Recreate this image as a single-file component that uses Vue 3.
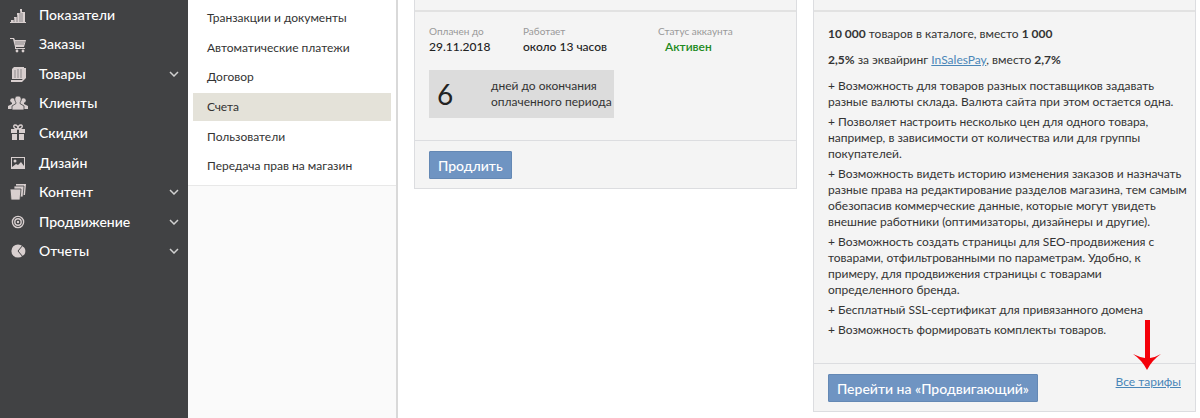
<template>
  <div class="layout">
    <nav class="sidebar">
      <ul class="sidebar__list">
        <li v-for="item in menu" :key="item.icon">
          <a href="#" class="sidebar__link">
            <svg class="sidebar__icon" viewBox="0 0 20 20" aria-hidden="true">
              <g v-if="item.icon === 'chart'">
                <path d="M3 15h3v3H3zM6 12h3v6H6zM9 8h3v10H9zM12 4h2v14h-2zM14 7h3v11h-3z" />
                <path d="M2 17h16v1H2z" />
                <path d="M6 13v4M9 10v7M12 6v11M14 8v9" class="line line--dark line--thin" />
              </g>
              <g v-else-if="item.icon === 'cart'">
                <path d="M2 4h4l1 2h11l-2 7H8v1h9v1H7v-2L5 5H2z" />
                <path d="M7 8h10M7 10h9" class="line line--dark line--thin" />
                <circle cx="9" cy="17" r="1.4" />
                <circle cx="15" cy="17" r="1.4" />
              </g>
              <g v-else-if="item.icon === 'goods'">
                <path d="M6 3h10v12H4V5z" />
                <path d="M7 6v8M10 5v9M13 5v9" class="line line--dark line--thin" />
                <path d="M16 4h2v10l-4 4H3v-2h11l2-3z" />
              </g>
              <g v-else-if="item.icon === 'clients'">
                <circle cx="4.5" cy="7.5" r="2.3" />
                <circle cx="15.5" cy="7.5" r="2.3" />
                <path d="M0 16v-3l4-2V8h4v8zM20 16v-3l-4-2V8h-4v8z" />
                <path
                  d="M10 3c2.4 0 3.4 1.4 3.2 3.4S12 9 12 10.500l4 2.500v4H4v-4l4-2.500C8 9 7 8.400 6.800 6.400S7.600 3 10 3z"
                  class="cutout"
                />
              </g>
              <g v-else-if="item.icon === 'gift'">
                <path d="M3 6h6v4H3zM11 6h6v4h-6zM4 11h5v6H4zM11 11h5v6h-5z" />
                <path d="M10 6C5 6 5 2 7 2s3 2 3 4c0-2 1-4 3-4s2 4-3 4z" class="line" />
              </g>
              <g v-else-if="item.icon === 'image'">
                <path d="M3 4h14v12H3z" />
                <path d="M4 5h12v8l-3-4-3 3-2-1-4 3z" class="dark" />
                <circle cx="7" cy="8" r="1.5" />
              </g>
              <g v-else-if="item.icon === 'pages'">
                <path d="M8 2h10l-1 11H8z" />
                <path d="M6 4h10l-1 11H6z" class="cutout" />
                <path d="M2 7h11l-1 11H3z" class="cutout" />
              </g>
              <g v-else-if="item.icon === 'target'">
                <circle cx="10" cy="10" r="5.6" class="line" />
                <circle cx="10" cy="10" r="3.2" class="line" />
                <circle cx="10" cy="10" r="1.2" />
              </g>
              <g v-else>
                <circle cx="10" cy="10" r="6.6" />
                <path d="M15 4l-5 6 5 6" class="line line--dark" />
                <path d="M15.500 6c2.500 2 2.500 6 0 8.500L12 10z" />
              </g>
            </svg>
            <span class="sidebar__label">{{ item.label }}</span>
            <svg v-if="item.nested" class="sidebar__chevron" viewBox="0 0 10 6" aria-hidden="true">
              <path d="M1 1l4 4 4-4" />
            </svg>
          </a>
        </li>
      </ul>
    </nav>

    <nav class="submenu">
      <ul class="submenu__list">
        <li v-for="item in submenu" :key="item">
          <a href="#" class="submenu__link" :class="{ 'submenu__link--active': item === activeItem }">
            {{ item }}
          </a>
        </li>
      </ul>
    </nav>

    <main class="content">
      <section class="card">
        <div class="card__header"></div>
        <div class="card__body card__body--account">
          <dl class="account">
            <div class="account__item">
              <dt>Оплачен до</dt>
              <dd>29.11.2018</dd>
            </div>
            <div class="account__item">
              <dt>Работает</dt>
              <dd>около 13 часов</dd>
            </div>
            <div class="account__item">
              <dt>Статус аккаунта</dt>
              <dd class="account__status">Активен</dd>
            </div>
          </dl>
          <div class="days">
            <span class="days__count">6</span>
            <span class="days__text">дней до окончания<br />оплаченного периода</span>
          </div>
        </div>
        <div class="card__footer">
          <button type="button" class="button">Продлить</button>
        </div>
      </section>

      <section class="card">
        <div class="card__header"></div>
        <div class="card__body card__body--tariff">
          <p class="lead"><b>10 000</b> товаров в каталоге, вместо <b>1 000</b></p>
          <p class="lead">
            <b>2,5%</b> за эквайринг <a href="#" class="link">InSalesPay</a>, вместо <b>2,7%</b>
          </p>
          <p v-for="feature in features" :key="feature" class="feature">+ {{ feature }}</p>
        </div>
        <div class="card__footer">
          <button type="button" class="button">Перейти на «Продвигающий»</button>
          <div class="tariffs">
            <a href="#" class="link">Все тарифы</a>
            <svg class="tariffs__arrow" viewBox="0 0 28 50" aria-hidden="true">
              <path d="M12 0h5v38q6-1 11-4-9 6-14 16Q9 40 0 34q6 3 12 4z" />
            </svg>
          </div>
        </div>
      </section>
    </main>
  </div>
</template>

<script setup>
import { ref } from "vue";

const menu = [
  { icon: "chart", label: "Показатели" },
  { icon: "cart", label: "Заказы" },
  { icon: "goods", label: "Товары", nested: true },
  { icon: "clients", label: "Клиенты" },
  { icon: "gift", label: "Скидки" },
  { icon: "image", label: "Дизайн" },
  { icon: "pages", label: "Контент", nested: true },
  { icon: "target", label: "Продвижение", nested: true },
  { icon: "reports", label: "Отчеты", nested: true },
];

const submenu = [
  "Транзакции и документы",
  "Автоматические платежи",
  "Договор",
  "Счета",
  "Пользователи",
  "Передача прав на магазин",
];

const activeItem = ref("Счета");

const features = [
  "Возможность для товаров разных поставщиков задавать разные валюты склада. Валюта сайта при этом остается одна.",
  "Позволяет настроить несколько цен для одного товара, например, в зависимости от количества или для группы покупателей.",
  "Возможность видеть историю изменения заказов и назначать разные права на редактирование разделов магазина, тем самым обезопасив коммерческие данные, которые могут увидеть внешние работники (оптимизаторы, дизайнеры и другие).",
  "Возможность создать страницы для SEO-продвижения с товарами, отфильтрованными по параметрам. Удобно, к примеру, для продвижения страницы с товарами определенного бренда.",
  "Бесплатный SSL-сертификат для привязанного домена",
  "Возможность формировать комплекты товаров.",
];
</script>

<style>
body {
  background-color: #fff;
}
</style>

<style scoped>
.layout {
  display: grid;
  grid-template-columns: 188px 210px 1fr;
  min-height: 100vh;
  font-family: Lato, "Open Sans", sans-serif;
  font-size: 12px;
  line-height: 16px;
  color: #333;
}

ul,
dl,
dd,
p {
  margin: 0;
  padding: 0;
  list-style: none;
}

.sidebar {
  background-color: #414244;
}

.sidebar__list {
  display: grid;
  grid-auto-rows: 1fr;
  height: 266px;
}

.sidebar__link {
  display: flex;
  align-items: center;
  height: 100%;
  padding: 0 9px 0 8px;
  color: #fff;
  font-size: 14px;
  font-weight: 500;
  text-decoration: none;
}

.sidebar__icon {
  width: 20px;
  height: 20px;
  margin-right: 11px;
  fill: #d8cfcf;
}

.sidebar__icon .line {
  fill: none;
  stroke: #d8cfcf;
  stroke-width: 1.4;
}

.sidebar__icon .line--dark {
  stroke: #414244;
  stroke-width: 1;
}

.sidebar__icon .line--thin {
  stroke-width: 0.5;
}

.sidebar__icon .dark {
  fill: #414244;
}

.sidebar__icon .cutout {
  stroke: #414244;
  stroke-width: 0.8;
}

.sidebar__label {
  flex: 1;
}

.sidebar__chevron {
  width: 10px;
  height: 6px;
  fill: none;
  stroke: #d0d0d0;
  stroke-width: 1.5;
}

.submenu {
  background-color: #fafafa;
  border-right: 2px solid #d9d9d9;
}

.submenu__list {
  display: grid;
  grid-auto-rows: 1fr;
  height: 178px;
  padding: 3px 5px 4px;
  background-color: #fff;
  border-bottom: 1px solid #e8e8e8;
}

.submenu__link {
  display: flex;
  align-items: center;
  height: 28px;
  margin-top: 1px;
  padding-left: 14px;
  color: #333;
  text-decoration: none;
}

.submenu__link--active {
  background-color: #e4e2d9;
}

.content {
  display: grid;
  grid-template-columns: 1fr 1fr;
  align-items: start;
  gap: 16px;
  padding: 0 4px 0 16px;
}

.card {
  background-color: #f4f4f4;
  border: 1px solid #dcdde0;
  border-top: 0;
}

.card__header {
  height: 10px;
  border-bottom: 2px solid #e2e2e2;
}

.card__body {
  padding: 0 8px 0 14px;
}

.card__body--account {
  padding-top: 12px;
  padding-bottom: 22px;
}

.card__body--tariff {
  padding-top: 14px;
  padding-bottom: 21px;
}

.card__footer {
  display: flex;
  justify-content: space-between;
  padding: 10px 14px 9px;
  border-top: 1px solid #dcdde0;
}

.account {
  display: grid;
  grid-template-columns: 94px 135px auto;
  margin-bottom: 16px;
}

.account__item dt {
  font-size: 10px;
  line-height: 15px;
  color: #999;
}

.account__item dd {
  line-height: 15px;
  font-weight: 500;
  color: #222;
}

.account__item .account__status {
  padding-left: 7px;
  font-weight: 600;
  color: #218a21;
}

.days {
  display: inline-flex;
  align-items: center;
  height: 48px;
  padding: 0 2px 0 8px;
  background-color: #dcdcdc;
}

.days__count {
  width: 54px;
  font-size: 28px;
  line-height: 32px;
  color: #222;
}

.lead {
  margin-bottom: 10px;
}

.feature {
  margin-bottom: 4px;
}

.link {
  color: #4a86b8;
  text-decoration: underline;
}

.button {
  height: 28px;
  padding: 0 8px;
  border: 1px solid #6488b4;
  border-radius: 1px;
  background-color: #6f94c2;
  color: #fff;
  font-family: inherit;
  font-size: 14px;
  font-weight: 500;
  cursor: pointer;
}

.tariffs {
  position: relative;
}

.tariffs__arrow {
  position: absolute;
  right: 20px;
  bottom: 32px;
  width: 28px;
  height: 50px;
  fill: #f40009;
}
</style>
